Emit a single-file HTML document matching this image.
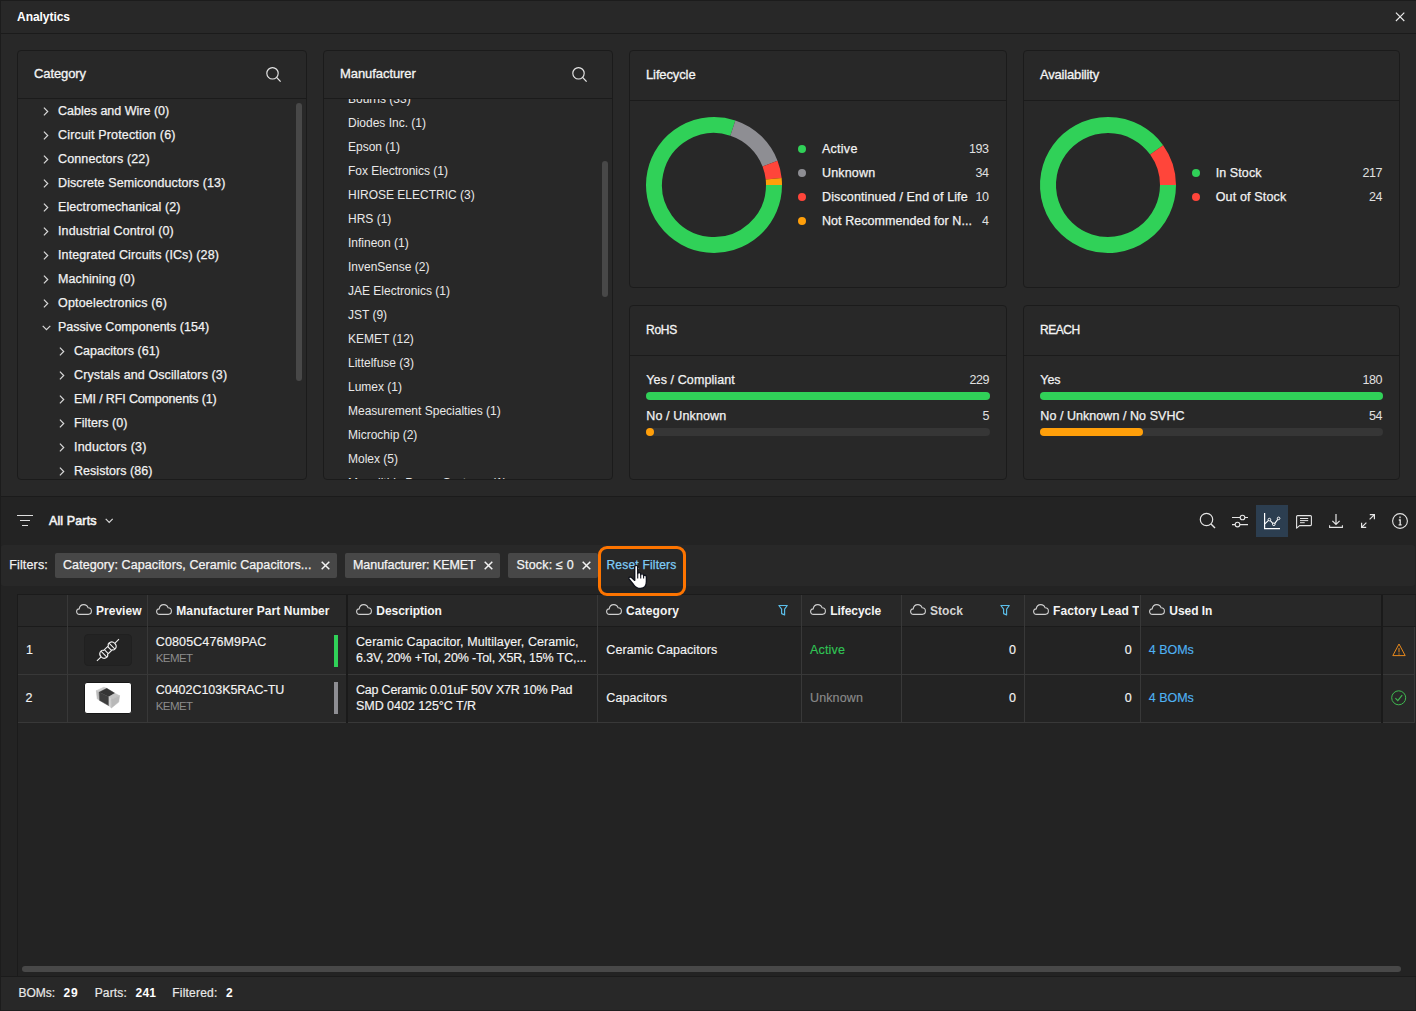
<!DOCTYPE html>
<html>
<head>
<meta charset="utf-8">
<title>Analytics</title>
<style>
*{box-sizing:border-box;margin:0;padding:0}
html,body{width:1416px;height:1011px;overflow:hidden;background:#282828}
body{font-family:"Liberation Sans",sans-serif;font-size:12.5px;color:#f0f0f0;position:relative}
.t{position:absolute;white-space:pre;line-height:1}
.a{position:absolute}
.card{position:absolute;border:1px solid #1b1b1b;border-radius:4px}
.hl{position:absolute;height:1px;background:#1b1b1b}
.vl{position:absolute;width:1px;background:#383838}
.sb{position:absolute;background:#484848;border-radius:3px}
.dot{position:absolute;width:8px;height:8px;border-radius:50%}
.chip{position:absolute;top:553px;height:25px;background:#474747;border-radius:2px}
svg{position:absolute;overflow:visible}
</style>
</head>
<body>
<div class="a" style="left:0;top:0;width:1416px;height:33px;background:#282828"></div>
<div class="hl" style="left:0;top:33px;width:1416px"></div>
<div class="t" style="left:17.00px;top:11.00px;font-size:12px;font-weight:bold;color:#ffffff;letter-spacing:-0.040px;">Analytics</div>
<svg style="left:1395px;top:12px" width="10" height="10" viewBox="0 0 10 10"><path d="M0.9 0.6 L9.3 9 M9.3 0.6 L0.9 9" stroke="#ededed" stroke-width="1.1" fill="none"/></svg>
<div class="card" style="left:17px;top:50px;width:290px;height:430px"></div>
<div class="hl" style="left:18px;top:98px;width:288px"></div>
<div class="t" style="left:34.00px;top:67.00px;font-size:13px;-webkit-text-stroke:0.3px;color:#f4f4f4;letter-spacing:-0.094px;">Category</div>
<svg style="left:266px;top:67px" width="16" height="16" viewBox="0 0 16 16"><circle cx="6.5" cy="6.3" r="5.7" stroke="#e6e6e6" stroke-width="1.15" fill="none"/><path d="M10.6 10.4 L14.6 14.6" stroke="#e6e6e6" stroke-width="1.3" fill="none"/></svg>
<div class="card" style="left:323px;top:50px;width:290px;height:430px"></div>
<div class="hl" style="left:324px;top:98px;width:288px"></div>
<div class="t" style="left:340.00px;top:67.00px;font-size:13px;-webkit-text-stroke:0.3px;color:#f4f4f4;letter-spacing:-0.066px;">Manufacturer</div>
<svg style="left:572px;top:67px" width="16" height="16" viewBox="0 0 16 16"><circle cx="6.5" cy="6.3" r="5.7" stroke="#e6e6e6" stroke-width="1.15" fill="none"/><path d="M10.6 10.4 L14.6 14.6" stroke="#e6e6e6" stroke-width="1.3" fill="none"/></svg>
<div class="card" style="left:629px;top:50px;width:378px;height:238px"></div>
<div class="hl" style="left:630px;top:100px;width:376px"></div>
<div class="t" style="left:646.00px;top:68.00px;font-size:13px;-webkit-text-stroke:0.3px;color:#f4f4f4;letter-spacing:-0.120px;">Lifecycle</div>
<div class="card" style="left:1023px;top:50px;width:377px;height:238px"></div>
<div class="hl" style="left:1024px;top:100px;width:375px"></div>
<div class="t" style="left:1040.00px;top:68.00px;font-size:13px;-webkit-text-stroke:0.3px;color:#f4f4f4;letter-spacing:-0.182px;">Availability</div>
<div class="card" style="left:629px;top:305px;width:378px;height:175px"></div>
<div class="hl" style="left:630px;top:355px;width:376px"></div>
<div class="t" style="left:646.00px;top:324.00px;font-size:12px;-webkit-text-stroke:0.3px;color:#f4f4f4;letter-spacing:-0.254px;">RoHS</div>
<div class="card" style="left:1023px;top:305px;width:377px;height:175px"></div>
<div class="hl" style="left:1024px;top:355px;width:375px"></div>
<div class="t" style="left:1040.00px;top:324.00px;font-size:12px;-webkit-text-stroke:0.3px;color:#f4f4f4;letter-spacing:-0.463px;">REACH</div>
<div class="a" style="left:18px;top:99px;width:288px;height:380px;overflow:hidden">
<div class="a" style="left:-18px;top:-99px;width:1416px;height:1011px">
<svg style="left:43.0px;top:106.5px" width="6" height="9" viewBox="0 0 6 9"><path d="M0.9 0.7 L4.7 4.5 L0.9 8.3" stroke="#d8d8d8" stroke-width="1.2" fill="none"/></svg>
<div class="t" style="left:58.00px;top:105.00px;font-size:12.5px;-webkit-text-stroke:0.25px;color:#f2f2f2;letter-spacing:0.002px;">Cables and Wire (0)</div>
<svg style="left:43.0px;top:130.5px" width="6" height="9" viewBox="0 0 6 9"><path d="M0.9 0.7 L4.7 4.5 L0.9 8.3" stroke="#d8d8d8" stroke-width="1.2" fill="none"/></svg>
<div class="t" style="left:58.00px;top:129.00px;font-size:12.5px;-webkit-text-stroke:0.25px;color:#f2f2f2;letter-spacing:0.166px;">Circuit Protection (6)</div>
<svg style="left:43.0px;top:154.5px" width="6" height="9" viewBox="0 0 6 9"><path d="M0.9 0.7 L4.7 4.5 L0.9 8.3" stroke="#d8d8d8" stroke-width="1.2" fill="none"/></svg>
<div class="t" style="left:58.00px;top:153.00px;font-size:12.5px;-webkit-text-stroke:0.25px;color:#f2f2f2;letter-spacing:0.138px;">Connectors (22)</div>
<svg style="left:43.0px;top:178.5px" width="6" height="9" viewBox="0 0 6 9"><path d="M0.9 0.7 L4.7 4.5 L0.9 8.3" stroke="#d8d8d8" stroke-width="1.2" fill="none"/></svg>
<div class="t" style="left:58.00px;top:177.00px;font-size:12.5px;-webkit-text-stroke:0.25px;color:#f2f2f2;letter-spacing:0.098px;">Discrete Semiconductors (13)</div>
<svg style="left:43.0px;top:202.5px" width="6" height="9" viewBox="0 0 6 9"><path d="M0.9 0.7 L4.7 4.5 L0.9 8.3" stroke="#d8d8d8" stroke-width="1.2" fill="none"/></svg>
<div class="t" style="left:58.00px;top:201.00px;font-size:12.5px;-webkit-text-stroke:0.25px;color:#f2f2f2;letter-spacing:0.077px;">Electromechanical (2)</div>
<svg style="left:43.0px;top:226.5px" width="6" height="9" viewBox="0 0 6 9"><path d="M0.9 0.7 L4.7 4.5 L0.9 8.3" stroke="#d8d8d8" stroke-width="1.2" fill="none"/></svg>
<div class="t" style="left:58.00px;top:225.00px;font-size:12.5px;-webkit-text-stroke:0.25px;color:#f2f2f2;letter-spacing:0.120px;">Industrial Control (0)</div>
<svg style="left:43.0px;top:250.5px" width="6" height="9" viewBox="0 0 6 9"><path d="M0.9 0.7 L4.7 4.5 L0.9 8.3" stroke="#d8d8d8" stroke-width="1.2" fill="none"/></svg>
<div class="t" style="left:58.00px;top:249.00px;font-size:12.5px;-webkit-text-stroke:0.25px;color:#f2f2f2;letter-spacing:0.110px;">Integrated Circuits (ICs) (28)</div>
<svg style="left:43.0px;top:274.5px" width="6" height="9" viewBox="0 0 6 9"><path d="M0.9 0.7 L4.7 4.5 L0.9 8.3" stroke="#d8d8d8" stroke-width="1.2" fill="none"/></svg>
<div class="t" style="left:58.00px;top:273.00px;font-size:12.5px;-webkit-text-stroke:0.25px;color:#f2f2f2;letter-spacing:0.090px;">Machining (0)</div>
<svg style="left:43.0px;top:298.5px" width="6" height="9" viewBox="0 0 6 9"><path d="M0.9 0.7 L4.7 4.5 L0.9 8.3" stroke="#d8d8d8" stroke-width="1.2" fill="none"/></svg>
<div class="t" style="left:58.00px;top:297.00px;font-size:12.5px;-webkit-text-stroke:0.25px;color:#f2f2f2;letter-spacing:0.184px;">Optoelectronics (6)</div>
<svg style="left:41.6px;top:324.6px" width="9" height="6" viewBox="0 0 9 6"><path d="M0.7 0.9 L4.5 4.7 L8.3 0.9" stroke="#d8d8d8" stroke-width="1.2" fill="none"/></svg>
<div class="t" style="left:58.00px;top:321.00px;font-size:12.5px;-webkit-text-stroke:0.25px;color:#f2f2f2;letter-spacing:0.013px;">Passive Components (154)</div>
<svg style="left:59.0px;top:346.5px" width="6" height="9" viewBox="0 0 6 9"><path d="M0.9 0.7 L4.7 4.5 L0.9 8.3" stroke="#d8d8d8" stroke-width="1.2" fill="none"/></svg>
<div class="t" style="left:74.00px;top:345.00px;font-size:12.5px;-webkit-text-stroke:0.25px;color:#f2f2f2;letter-spacing:0.023px;">Capacitors (61)</div>
<svg style="left:59.0px;top:370.5px" width="6" height="9" viewBox="0 0 6 9"><path d="M0.9 0.7 L4.7 4.5 L0.9 8.3" stroke="#d8d8d8" stroke-width="1.2" fill="none"/></svg>
<div class="t" style="left:74.00px;top:369.00px;font-size:12.5px;-webkit-text-stroke:0.25px;color:#f2f2f2;letter-spacing:0.113px;">Crystals and Oscillators (3)</div>
<svg style="left:59.0px;top:394.5px" width="6" height="9" viewBox="0 0 6 9"><path d="M0.9 0.7 L4.7 4.5 L0.9 8.3" stroke="#d8d8d8" stroke-width="1.2" fill="none"/></svg>
<div class="t" style="left:74.00px;top:393.00px;font-size:12.5px;-webkit-text-stroke:0.25px;color:#f2f2f2;letter-spacing:-0.136px;">EMI / RFI Components (1)</div>
<svg style="left:59.0px;top:418.5px" width="6" height="9" viewBox="0 0 6 9"><path d="M0.9 0.7 L4.7 4.5 L0.9 8.3" stroke="#d8d8d8" stroke-width="1.2" fill="none"/></svg>
<div class="t" style="left:74.00px;top:417.00px;font-size:12.5px;-webkit-text-stroke:0.25px;color:#f2f2f2;letter-spacing:0.074px;">Filters (0)</div>
<svg style="left:59.0px;top:442.5px" width="6" height="9" viewBox="0 0 6 9"><path d="M0.9 0.7 L4.7 4.5 L0.9 8.3" stroke="#d8d8d8" stroke-width="1.2" fill="none"/></svg>
<div class="t" style="left:74.00px;top:441.00px;font-size:12.5px;-webkit-text-stroke:0.25px;color:#f2f2f2;letter-spacing:0.179px;">Inductors (3)</div>
<svg style="left:59.0px;top:466.5px" width="6" height="9" viewBox="0 0 6 9"><path d="M0.9 0.7 L4.7 4.5 L0.9 8.3" stroke="#d8d8d8" stroke-width="1.2" fill="none"/></svg>
<div class="t" style="left:74.00px;top:465.00px;font-size:12.5px;-webkit-text-stroke:0.25px;color:#f2f2f2;letter-spacing:0.043px;">Resistors (86)</div>
</div></div>
<div class="sb" style="left:296px;top:103px;width:6px;height:278px"></div>
<div class="a" style="left:324px;top:99px;width:288px;height:380px;overflow:hidden">
<div class="a" style="left:-324px;top:-99px;width:1416px;height:1011px">
<div class="t" style="left:348.00px;top:93.00px;font-size:12px;color:#e8e8e8;">Bourns (33)</div>
<div class="t" style="left:348.00px;top:117.00px;font-size:12px;color:#e8e8e8;">Diodes Inc. (1)</div>
<div class="t" style="left:348.00px;top:141.00px;font-size:12px;color:#e8e8e8;">Epson (1)</div>
<div class="t" style="left:348.00px;top:165.00px;font-size:12px;color:#e8e8e8;">Fox Electronics (1)</div>
<div class="t" style="left:348.00px;top:189.00px;font-size:12px;color:#e8e8e8;">HIROSE ELECTRIC (3)</div>
<div class="t" style="left:348.00px;top:213.00px;font-size:12px;color:#e8e8e8;">HRS (1)</div>
<div class="t" style="left:348.00px;top:237.00px;font-size:12px;color:#e8e8e8;">Infineon (1)</div>
<div class="t" style="left:348.00px;top:261.00px;font-size:12px;color:#e8e8e8;">InvenSense (2)</div>
<div class="t" style="left:348.00px;top:285.00px;font-size:12px;color:#e8e8e8;">JAE Electronics (1)</div>
<div class="t" style="left:348.00px;top:309.00px;font-size:12px;color:#e8e8e8;">JST (9)</div>
<div class="t" style="left:348.00px;top:333.00px;font-size:12px;color:#e8e8e8;">KEMET (12)</div>
<div class="t" style="left:348.00px;top:357.00px;font-size:12px;color:#e8e8e8;">Littelfuse (3)</div>
<div class="t" style="left:348.00px;top:381.00px;font-size:12px;color:#e8e8e8;">Lumex (1)</div>
<div class="t" style="left:348.00px;top:405.00px;font-size:12px;color:#e8e8e8;">Measurement Specialties (1)</div>
<div class="t" style="left:348.00px;top:429.00px;font-size:12px;color:#e8e8e8;">Microchip (2)</div>
<div class="t" style="left:348.00px;top:453.00px;font-size:12px;color:#e8e8e8;">Molex (5)</div>
<div class="t" style="left:348.00px;top:477.00px;font-size:12px;color:#e8e8e8;">Monolithic Power Systems (1)</div>
</div></div>
<div class="sb" style="left:602px;top:161px;width:6px;height:136px"></div>
<svg style="left:644px;top:115px" width="140" height="140" viewBox="644 115 140 140"><path d="M774.000 185.000 A60 60 0 1 1 732.838 128.034" stroke="#30d158" stroke-width="16" fill="none"/><path d="M732.838 128.034 A60 60 0 0 1 770.047 163.583" stroke="#8e8e93" stroke-width="16" fill="none"/><path d="M770.047 163.583 A60 60 0 0 1 773.674 178.754" stroke="#ff453a" stroke-width="16" fill="none"/><path d="M773.674 178.754 A60 60 0 0 1 774.000 185.000" stroke="#ff9f0a" stroke-width="16" fill="none"/></svg>
<svg style="left:1038px;top:115px" width="140" height="140" viewBox="1038 115 140 140"><path d="M1168.000 185.000 A60 60 0 1 1 1156.633 149.860" stroke="#30d158" stroke-width="16" fill="none"/><path d="M1156.633 149.860 A60 60 0 0 1 1168.000 185.000" stroke="#ff453a" stroke-width="16" fill="none"/></svg>
<div class="dot" style="left:798px;top:145px;background:#30d158"></div>
<div class="t" style="left:822.00px;top:143.00px;font-size:12.5px;-webkit-text-stroke:0.25px;color:#f2f2f2;letter-spacing:0.259px;">Active</div>
<div class="t" style="right:427.40px;top:143.00px;font-size:12.5px;color:#e0e0e0;letter-spacing:-0.4px;">193</div>
<div class="dot" style="left:798px;top:169px;background:#8e8e93"></div>
<div class="t" style="left:822.00px;top:167.00px;font-size:12.5px;-webkit-text-stroke:0.25px;color:#f2f2f2;letter-spacing:0.168px;">Unknown</div>
<div class="t" style="right:427.40px;top:167.00px;font-size:12.5px;color:#e0e0e0;letter-spacing:-0.4px;">34</div>
<div class="dot" style="left:798px;top:193px;background:#ff453a"></div>
<div class="t" style="left:822.00px;top:191.00px;font-size:12.5px;-webkit-text-stroke:0.25px;color:#f2f2f2;letter-spacing:0.129px;">Discontinued / End of Life</div>
<div class="t" style="right:427.40px;top:191.00px;font-size:12.5px;color:#e0e0e0;letter-spacing:-0.4px;">10</div>
<div class="dot" style="left:798px;top:217px;background:#ff9f0a"></div>
<div class="t" style="left:822.00px;top:215.00px;font-size:12.5px;-webkit-text-stroke:0.25px;color:#f2f2f2;letter-spacing:0.055px;">Not Recommended for N...</div>
<div class="t" style="right:427.40px;top:215.00px;font-size:12.5px;color:#e0e0e0;letter-spacing:-0.4px;">4</div>
<div class="dot" style="left:1192px;top:169px;background:#30d158"></div>
<div class="t" style="left:1215.70px;top:167.00px;font-size:12.5px;-webkit-text-stroke:0.25px;color:#f2f2f2;letter-spacing:0.091px;">In Stock</div>
<div class="t" style="right:33.90px;top:167.00px;font-size:12.5px;color:#e0e0e0;letter-spacing:-0.4px;">217</div>
<div class="dot" style="left:1192px;top:193px;background:#ff453a"></div>
<div class="t" style="left:1215.70px;top:191.00px;font-size:12.5px;-webkit-text-stroke:0.25px;color:#f2f2f2;letter-spacing:0.160px;">Out of Stock</div>
<div class="t" style="right:33.90px;top:191.00px;font-size:12.5px;color:#e0e0e0;letter-spacing:-0.4px;">24</div>
<div class="t" style="left:646.30px;top:374.00px;font-size:12.5px;-webkit-text-stroke:0.25px;color:#f2f2f2;letter-spacing:0.100px;">Yes / Compliant</div>
<div class="t" style="right:426.90px;top:374.00px;font-size:12.5px;color:#e0e0e0;letter-spacing:-0.4px;">229</div>
<div class="a" style="left:646px;top:392px;width:344px;height:8px;border-radius:4px;background:#363636"></div>
<div class="a" style="left:646px;top:392px;width:344.0px;height:8px;border-radius:4px;background:#30d158"></div>
<div class="t" style="left:646.30px;top:410.00px;font-size:12.5px;-webkit-text-stroke:0.25px;color:#f2f2f2;letter-spacing:0.124px;">No / Unknown</div>
<div class="t" style="right:426.90px;top:410.00px;font-size:12.5px;color:#e0e0e0;letter-spacing:-0.4px;">5</div>
<div class="a" style="left:646px;top:428px;width:344px;height:8px;border-radius:4px;background:#363636"></div>
<div class="a" style="left:646px;top:428px;width:7.5px;height:8px;border-radius:4px;background:#ff9f0a"></div>
<div class="t" style="left:1040.30px;top:374.00px;font-size:12.5px;-webkit-text-stroke:0.25px;color:#f2f2f2;letter-spacing:-0.035px;">Yes</div>
<div class="t" style="right:33.90px;top:374.00px;font-size:12.5px;color:#e0e0e0;letter-spacing:-0.4px;">180</div>
<div class="a" style="left:1040px;top:392px;width:343px;height:8px;border-radius:4px;background:#363636"></div>
<div class="a" style="left:1040px;top:392px;width:343.0px;height:8px;border-radius:4px;background:#30d158"></div>
<div class="t" style="left:1040.30px;top:410.00px;font-size:12.5px;-webkit-text-stroke:0.25px;color:#f2f2f2;letter-spacing:0.054px;">No / Unknown / No SVHC</div>
<div class="t" style="right:33.90px;top:410.00px;font-size:12.5px;color:#e0e0e0;letter-spacing:-0.4px;">54</div>
<div class="a" style="left:1040px;top:428px;width:343px;height:8px;border-radius:4px;background:#363636"></div>
<div class="a" style="left:1040px;top:428px;width:103.2px;height:8px;border-radius:4px;background:#ff9f0a"></div>
<div class="a" style="left:0;top:497px;width:1416px;height:514px;background:#232323"></div>
<div class="hl" style="left:0;top:496px;width:1416px"></div>
<div class="a" style="left:17px;top:515px;width:16px;height:1px;background:#dedede"></div><div class="a" style="left:20px;top:520px;width:10px;height:1px;background:#dedede"></div><div class="a" style="left:22px;top:525px;width:6px;height:1px;background:#dedede"></div>
<div class="t" style="left:49.00px;top:515.00px;font-size:12.5px;-webkit-text-stroke:0.55px;color:#f4f4f4;letter-spacing:0.117px;">All Parts</div>
<svg style="left:105px;top:518px" width="9" height="6" viewBox="0 0 9 6"><path d="M0.7 0.9 L4.2 4.4 L7.7 0.9" stroke="#d8d8d8" stroke-width="1.2" fill="none"/></svg>
<div class="a" style="left:1256px;top:505px;width:32px;height:32px;background:#2c3e50"></div>
<svg style="left:1199px;top:512px" width="17" height="17" viewBox="0 0 17 17"><circle cx="7.5" cy="7.5" r="6.2" stroke="#e4e4e4" stroke-width="1.2" fill="none"/><path d="M12 12 L16 16" stroke="#e4e4e4" stroke-width="1.4" fill="none"/></svg>
<svg style="left:1232px;top:513px" width="16" height="16" viewBox="0 0 16 16"><path d="M0 4.5 H8 M13 4.5 H16 M0 11.6 H3 M8 11.6 H16" stroke="#e4e4e4" stroke-width="1.1" fill="none"/><circle cx="10.5" cy="4.5" r="2.3" stroke="#e4e4e4" stroke-width="1.1" fill="none"/><circle cx="5.5" cy="11.6" r="2.3" stroke="#e4e4e4" stroke-width="1.1" fill="none"/></svg>
<svg style="left:1264px;top:513px" width="17" height="17" viewBox="0 0 17 17"><path d="M0.6 0 V15.6 H16" stroke="#ffffff" stroke-width="1.2" fill="none"/><path d="M0.8 10.8 L4.5 7.4 M6.3 7.6 L9 10.6 M10.6 10.6 L13.8 6.4" stroke="#ffffff" stroke-width="1.1" fill="none"/><circle cx="5.4" cy="6.6" r="1.3" stroke="#ffffff" stroke-width="1" fill="none"/><circle cx="9.8" cy="11.3" r="1.3" stroke="#ffffff" stroke-width="1" fill="none"/><circle cx="14.6" cy="5.4" r="1.3" stroke="#ffffff" stroke-width="1" fill="none"/></svg>
<svg style="left:1296px;top:515px" width="16" height="14" viewBox="0 0 16 14"><path d="M0.6 13.2 V1.6 Q0.6 0.6 1.6 0.6 H14.4 Q15.4 0.6 15.4 1.6 V9.6 Q15.4 10.6 14.4 10.6 H3.6 Z" stroke="#e4e4e4" stroke-width="1.1" fill="none" stroke-linejoin="round"/><path d="M4 3.5 H12.2 M4 5.6 H12.2 M4 7.7 H8.7" stroke="#e4e4e4" stroke-width="1" fill="none"/></svg>
<svg style="left:1329px;top:514px" width="14" height="14" viewBox="0 0 14 14"><path d="M7 0 V10.2 M3.4 6.8 L7 10.4 L10.6 6.8" stroke="#e4e4e4" stroke-width="1.2" fill="none"/><path d="M0.6 11.2 V13.4 H13.4 V11.2" stroke="#e4e4e4" stroke-width="1.1" fill="none"/></svg>
<svg style="left:1361px;top:514px" width="14" height="14" viewBox="0 0 14 14"><path d="M8.6 5.4 L13.4 0.6 M8.8 0.6 H13.4 V5.2 M5.4 8.6 L0.6 13.4 M0.6 8.8 V13.4 H5.2" stroke="#e4e4e4" stroke-width="1.2" fill="none"/></svg>
<svg style="left:1392px;top:513px" width="16" height="16" viewBox="0 0 16 16"><circle cx="8" cy="8" r="7.4" stroke="#e4e4e4" stroke-width="1.1" fill="none"/><path d="M8 3.6 V5.2 M6.8 7 H8.2 V11.6 M6.6 11.8 H9.6" stroke="#e4e4e4" stroke-width="1.3" fill="none"/></svg>
<div class="a" style="left:1px;top:545px;width:1414px;height:41px;background:#282828;border-radius:3px"></div>
<div class="t" style="left:9.20px;top:559.00px;font-size:12.5px;-webkit-text-stroke:0.25px;color:#f0f0f0;letter-spacing:0.162px;">Filters:</div>
<div class="chip" style="left:55px;width:282px"></div>
<div class="t" style="left:63.00px;top:559.00px;font-size:12.5px;-webkit-text-stroke:0.25px;color:#f4f4f4;letter-spacing:0.092px;">Category: Capacitors, Ceramic Capacitors...</div>
<svg style="left:321.0px;top:561px" width="9" height="9" viewBox="0 0 9 9"><path d="M0.7 0.7 L8.3 8.3 M8.3 0.7 L0.7 8.3" stroke="#f2f2f2" stroke-width="1.5" fill="none"/></svg>
<div class="chip" style="left:345px;width:155px"></div>
<div class="t" style="left:353.00px;top:559.00px;font-size:12.5px;-webkit-text-stroke:0.25px;color:#f4f4f4;letter-spacing:-0.050px;">Manufacturer: KEMET</div>
<svg style="left:483.5px;top:561px" width="9" height="9" viewBox="0 0 9 9"><path d="M0.7 0.7 L8.3 8.3 M8.3 0.7 L0.7 8.3" stroke="#f2f2f2" stroke-width="1.5" fill="none"/></svg>
<div class="chip" style="left:508px;width:90px"></div>
<div class="t" style="left:516.50px;top:559.00px;font-size:12.5px;-webkit-text-stroke:0.25px;color:#f4f4f4;letter-spacing:0.190px;">Stock: ≤ 0</div>
<svg style="left:581.5px;top:561px" width="9" height="9" viewBox="0 0 9 9"><path d="M0.7 0.7 L8.3 8.3 M8.3 0.7 L0.7 8.3" stroke="#f2f2f2" stroke-width="1.5" fill="none"/></svg>
<div class="a" style="left:18px;top:595px;width:1397px;height:31px;background:#282828"></div>
<div class="a" style="left:18px;top:627px;width:328px;height:95px;background:#282828"></div>
<div class="a" style="left:1383px;top:627px;width:31px;height:95px;background:#282828"></div>
<div class="hl" style="left:17px;top:594px;width:1399px"></div>
<div class="hl" style="left:17px;top:626px;width:1399px"></div>
<div class="hl" style="left:18px;top:674px;width:1397px;background:#383838"></div>
<div class="hl" style="left:18px;top:722px;width:1397px;background:#383838"></div>
<div class="vl" style="left:17px;top:594px;height:382px;background:#1b1b1b"></div>
<div class="vl" style="left:67px;top:595px;height:127px"></div>
<div class="vl" style="left:147px;top:595px;height:127px"></div>
<div class="vl" style="left:597px;top:595px;height:127px"></div>
<div class="vl" style="left:801px;top:595px;height:127px"></div>
<div class="vl" style="left:901px;top:595px;height:127px"></div>
<div class="vl" style="left:1024px;top:595px;height:127px"></div>
<div class="vl" style="left:1140px;top:595px;height:127px"></div>
<div class="vl" style="left:1414px;top:627px;height:96px"></div>
<div class="vl" style="left:346px;top:595px;height:128px;width:2px;background:#1a1a1a"></div>
<div class="vl" style="left:1381px;top:595px;height:128px;width:2px;background:#1a1a1a"></div>
<svg style="left:76.0px;top:604px" width="16" height="11" viewBox="0 0 16 11"><path d="M3.6 10.4 C1.6 10.4 0.6 9 0.6 7.6 C0.6 6.1 1.7 5 3.2 4.9 C3.5 2.4 5.3 0.6 7.8 0.6 C9.9 0.6 11.5 1.9 12.1 3.8 C14 3.8 15.4 5.2 15.4 7.1 C15.4 9 14 10.4 12.2 10.4 Z" stroke="#cfcfcf" stroke-width="1.1" fill="none"/></svg>
<div class="t" style="left:96.00px;top:605.00px;font-size:12px;font-weight:bold;color:#f4f4f4;letter-spacing:0.018px;">Preview</div>
<svg style="left:155.6px;top:604px" width="16" height="11" viewBox="0 0 16 11"><path d="M3.6 10.4 C1.6 10.4 0.6 9 0.6 7.6 C0.6 6.1 1.7 5 3.2 4.9 C3.5 2.4 5.3 0.6 7.8 0.6 C9.9 0.6 11.5 1.9 12.1 3.8 C14 3.8 15.4 5.2 15.4 7.1 C15.4 9 14 10.4 12.2 10.4 Z" stroke="#cfcfcf" stroke-width="1.1" fill="none"/></svg>
<div class="t" style="left:176.30px;top:605.00px;font-size:12px;font-weight:bold;color:#f4f4f4;letter-spacing:0.080px;">Manufacturer Part Number</div>
<svg style="left:356.0px;top:604px" width="16" height="11" viewBox="0 0 16 11"><path d="M3.6 10.4 C1.6 10.4 0.6 9 0.6 7.6 C0.6 6.1 1.7 5 3.2 4.9 C3.5 2.4 5.3 0.6 7.8 0.6 C9.9 0.6 11.5 1.9 12.1 3.8 C14 3.8 15.4 5.2 15.4 7.1 C15.4 9 14 10.4 12.2 10.4 Z" stroke="#cfcfcf" stroke-width="1.1" fill="none"/></svg>
<div class="t" style="left:376.30px;top:605.00px;font-size:12px;font-weight:bold;color:#f4f4f4;letter-spacing:-0.047px;">Description</div>
<svg style="left:606.0px;top:604px" width="16" height="11" viewBox="0 0 16 11"><path d="M3.6 10.4 C1.6 10.4 0.6 9 0.6 7.6 C0.6 6.1 1.7 5 3.2 4.9 C3.5 2.4 5.3 0.6 7.8 0.6 C9.9 0.6 11.5 1.9 12.1 3.8 C14 3.8 15.4 5.2 15.4 7.1 C15.4 9 14 10.4 12.2 10.4 Z" stroke="#cfcfcf" stroke-width="1.1" fill="none"/></svg>
<div class="t" style="left:626.00px;top:605.00px;font-size:12px;font-weight:bold;color:#f4f4f4;letter-spacing:0.123px;">Category</div>
<svg style="left:777.5px;top:604px" width="12" height="12" viewBox="0 0 12 12"><path d="M0.9 1.5 H9.3 L6.6 5.1 V10.9 L3.6 9.6 V5.1 Z" stroke="#5bbfeb" stroke-width="1.15" fill="none" stroke-linejoin="round"/></svg>
<svg style="left:810.0px;top:604px" width="16" height="11" viewBox="0 0 16 11"><path d="M3.6 10.4 C1.6 10.4 0.6 9 0.6 7.6 C0.6 6.1 1.7 5 3.2 4.9 C3.5 2.4 5.3 0.6 7.8 0.6 C9.9 0.6 11.5 1.9 12.1 3.8 C14 3.8 15.4 5.2 15.4 7.1 C15.4 9 14 10.4 12.2 10.4 Z" stroke="#cfcfcf" stroke-width="1.1" fill="none"/></svg>
<div class="t" style="left:830.20px;top:605.00px;font-size:12px;font-weight:bold;color:#f4f4f4;letter-spacing:-0.042px;">Lifecycle</div>
<svg style="left:910.0px;top:604px" width="16" height="11" viewBox="0 0 16 11"><path d="M3.6 10.4 C1.6 10.4 0.6 9 0.6 7.6 C0.6 6.1 1.7 5 3.2 4.9 C3.5 2.4 5.3 0.6 7.8 0.6 C9.9 0.6 11.5 1.9 12.1 3.8 C14 3.8 15.4 5.2 15.4 7.1 C15.4 9 14 10.4 12.2 10.4 Z" stroke="#cfcfcf" stroke-width="1.1" fill="none"/></svg>
<div class="t" style="left:930.00px;top:605.00px;font-size:12px;font-weight:bold;color:#d4d4d4;letter-spacing:0.062px;">Stock</div>
<svg style="left:1000.3px;top:604px" width="12" height="12" viewBox="0 0 12 12"><path d="M0.9 1.5 H9.3 L6.6 5.1 V10.9 L3.6 9.6 V5.1 Z" stroke="#5bbfeb" stroke-width="1.15" fill="none" stroke-linejoin="round"/></svg>
<svg style="left:1033.0px;top:604px" width="16" height="11" viewBox="0 0 16 11"><path d="M3.6 10.4 C1.6 10.4 0.6 9 0.6 7.6 C0.6 6.1 1.7 5 3.2 4.9 C3.5 2.4 5.3 0.6 7.8 0.6 C9.9 0.6 11.5 1.9 12.1 3.8 C14 3.8 15.4 5.2 15.4 7.1 C15.4 9 14 10.4 12.2 10.4 Z" stroke="#cfcfcf" stroke-width="1.1" fill="none"/></svg>
<div class="t" style="left:1053.10px;top:605.00px;font-size:12px;font-weight:bold;color:#f4f4f4;letter-spacing:0.089px;width:86.3px;overflow:hidden;">Factory Lead Time</div>
<svg style="left:1148.8px;top:604px" width="16" height="11" viewBox="0 0 16 11"><path d="M3.6 10.4 C1.6 10.4 0.6 9 0.6 7.6 C0.6 6.1 1.7 5 3.2 4.9 C3.5 2.4 5.3 0.6 7.8 0.6 C9.9 0.6 11.5 1.9 12.1 3.8 C14 3.8 15.4 5.2 15.4 7.1 C15.4 9 14 10.4 12.2 10.4 Z" stroke="#cfcfcf" stroke-width="1.1" fill="none"/></svg>
<div class="t" style="left:1169.30px;top:605.00px;font-size:12px;font-weight:bold;color:#f4f4f4;letter-spacing:-0.049px;">Used In</div>
<div class="t" style="left:26.00px;top:644.00px;font-size:12.5px;-webkit-text-stroke:0.15px;color:#f2f2f2;">1</div>
<div class="t" style="left:25.50px;top:692.00px;font-size:12.5px;-webkit-text-stroke:0.15px;color:#f2f2f2;">2</div>
<div class="a" style="left:84px;top:634px;width:48px;height:32px;border:1px solid #202020;border-radius:4px;background:#232323"></div>
<svg style="left:84px;top:634px" width="48" height="32" viewBox="0 0 48 32"><g transform="translate(23.95,16.1) rotate(-44.6)" stroke="#ececec" stroke-width="1.1" fill="none"><path d="M-15.5 0 H-9.6 M9.6 0 H15.5"/><path d="M-9.6 0 C-9.6 -4.9 -4.2 -5.1 -3.3 -2.8 L3.3 -2.8 C4.2 -5.1 9.6 -4.9 9.6 0 C9.6 4.9 4.2 5.1 3.3 2.8 L-3.3 2.8 C-4.2 5.1 -9.6 4.9 -9.6 0 Z"/><path d="M-5.7 -4.2 V4.2 M-2.3 -2.8 V2.8 M2.3 -2.8 V2.8 M5.7 -4.2 V4.2"/></g></svg>
<div class="a" style="left:84px;top:682px;width:48px;height:32px;border:1px solid #171717;border-radius:3px;background:#ffffff"></div>
<svg style="left:84px;top:682px" width="48" height="32" viewBox="0 0 48 32"><polygon points="12.29,8.68 19.94,5.12 22.79,6.37 15.14,10.29" fill="#cbcbcb" stroke="#cbcbcb" stroke-width="0.5"/><polygon points="12.29,8.68 15.14,10.29 15.67,18.48 13.18,16.87" fill="#bcbcbc" stroke="#bcbcbc" stroke-width="0.5"/><polygon points="15.14,10.29 22.79,6.37 30.98,11.35 24.93,14.74" fill="#353535" stroke="#353535" stroke-width="0.5"/><polygon points="15.14,10.29 24.93,14.74 24.93,23.82 15.67,18.48" fill="#3e3e3e" stroke="#3e3e3e" stroke-width="0.5"/><polygon points="24.93,14.74 30.98,11.35 35.61,13.67 27.07,17.41" fill="#c4c4c4" stroke="#c4c4c4" stroke-width="0.5"/><polygon points="24.93,14.74 27.07,17.41 27.42,25.96 24.93,23.82" fill="#d0d0d0" stroke="#d0d0d0" stroke-width="0.5"/><polygon points="27.07,17.41 35.61,13.67 34.72,20.08 27.42,25.96" fill="#b9b9b9" stroke="#b9b9b9" stroke-width="0.5"/></svg>
<div class="t" style="left:155.80px;top:636.00px;font-size:12.5px;-webkit-text-stroke:0.15px;color:#f4f4f4;letter-spacing:0.117px;">C0805C476M9PAC</div>
<div class="t" style="left:155.80px;top:653.00px;font-size:11.5px;color:#8c8c8c;letter-spacing:-0.605px;">KEMET</div>
<div class="t" style="left:155.80px;top:684.00px;font-size:12.5px;-webkit-text-stroke:0.15px;color:#f4f4f4;letter-spacing:-0.043px;">C0402C103K5RAC-TU</div>
<div class="t" style="left:155.80px;top:701.00px;font-size:11.5px;color:#8c8c8c;letter-spacing:-0.605px;">KEMET</div>
<div class="a" style="left:334px;top:635px;width:4px;height:32px;background:#30d158"></div>
<div class="a" style="left:334px;top:682px;width:4px;height:32px;background:#8e8e93"></div>
<div class="t" style="left:356.00px;top:636.00px;font-size:12.5px;-webkit-text-stroke:0.15px;color:#f4f4f4;letter-spacing:0.077px;">Ceramic Capacitor, Multilayer, Ceramic,</div>
<div class="t" style="left:356.00px;top:652.00px;font-size:12.5px;-webkit-text-stroke:0.15px;color:#f4f4f4;letter-spacing:-0.134px;">6.3V, 20% +Tol, 20% -Tol, X5R, 15% TC,...</div>
<div class="t" style="left:356.00px;top:684.00px;font-size:12.5px;-webkit-text-stroke:0.15px;color:#f4f4f4;letter-spacing:-0.198px;">Cap Ceramic 0.01uF 50V X7R 10% Pad</div>
<div class="t" style="left:356.00px;top:700.00px;font-size:12.5px;-webkit-text-stroke:0.15px;color:#f4f4f4;letter-spacing:-0.044px;">SMD 0402 125°C T/R</div>
<div class="t" style="left:606.30px;top:644.00px;font-size:12.5px;-webkit-text-stroke:0.15px;color:#f4f4f4;letter-spacing:0.069px;">Ceramic Capacitors</div>
<div class="t" style="left:606.30px;top:692.00px;font-size:12.5px;-webkit-text-stroke:0.15px;color:#f4f4f4;letter-spacing:0.105px;">Capacitors</div>
<div class="t" style="left:810.00px;top:644.00px;font-size:12.5px;-webkit-text-stroke:0.15px;color:#30c455;letter-spacing:0.159px;">Active</div>
<div class="t" style="left:810.00px;top:692.00px;font-size:12.5px;-webkit-text-stroke:0.15px;color:#8a8a8a;letter-spacing:0.125px;">Unknown</div>
<div class="t" style="right:400.00px;top:644.00px;font-size:12.5px;-webkit-text-stroke:0.15px;color:#f4f4f4;">0</div>
<div class="t" style="right:400.00px;top:692.00px;font-size:12.5px;-webkit-text-stroke:0.15px;color:#f4f4f4;">0</div>
<div class="t" style="right:284.30px;top:644.00px;font-size:12.5px;-webkit-text-stroke:0.15px;color:#f4f4f4;">0</div>
<div class="t" style="right:284.30px;top:692.00px;font-size:12.5px;-webkit-text-stroke:0.15px;color:#f4f4f4;">0</div>
<div class="t" style="left:1148.80px;top:644.00px;font-size:12.5px;-webkit-text-stroke:0.15px;color:#4fb2f2;letter-spacing:-0.026px;">4 BOMs</div>
<div class="t" style="left:1148.80px;top:692.00px;font-size:12.5px;-webkit-text-stroke:0.15px;color:#4fb2f2;letter-spacing:-0.026px;">4 BOMs</div>
<svg style="left:1391.5px;top:643px" width="14" height="14" viewBox="0 0 14 14"><path d="M7 1 L13.2 12.6 H0.8 Z" stroke="#e8891c" stroke-width="1" fill="none" stroke-linejoin="round"/><path d="M7 5 V9.4 M7 10.4 V11.6" stroke="#e8891c" stroke-width="1" fill="none"/></svg>
<svg style="left:1391px;top:690px" width="16" height="16" viewBox="0 0 16 16"><circle cx="7.7" cy="7.8" r="7" stroke="#3fb950" stroke-width="1" fill="none"/><path d="M4.4 8.2 L6.8 10.6 L11.2 5.2" stroke="#3fb950" stroke-width="1.1" fill="none"/></svg>
<div class="sb" style="left:22px;top:966px;width:1379px;height:6px"></div>
<div class="a" style="left:0;top:977px;width:1416px;height:34px;background:#282828"></div>
<div class="hl" style="left:0;top:976px;width:1416px"></div>
<div class="t" style="left:18.40px;top:987.00px;font-size:12px;-webkit-text-stroke:0.2px;color:#e8e8e8;letter-spacing:-0.014px;">BOMs:</div>
<div class="t" style="left:63.60px;top:987.00px;font-size:12px;font-weight:bold;color:#ffffff;letter-spacing:0.720px;">29</div>
<div class="t" style="left:94.70px;top:987.00px;font-size:12px;-webkit-text-stroke:0.2px;color:#e8e8e8;letter-spacing:0.159px;">Parts:</div>
<div class="t" style="left:135.60px;top:987.00px;font-size:12px;font-weight:bold;color:#ffffff;letter-spacing:0.123px;">241</div>
<div class="t" style="left:172.20px;top:987.00px;font-size:12px;-webkit-text-stroke:0.2px;color:#e8e8e8;letter-spacing:0.227px;">Filtered:</div>
<div class="t" style="left:226.00px;top:987.00px;font-size:12px;font-weight:bold;color:#ffffff;">2</div>
<div class="a" style="left:598px;top:546px;width:88px;height:50px;border:3px solid #fd7400;border-radius:9px"></div>
<div class="t" style="left:606.50px;top:559.00px;font-size:12px;-webkit-text-stroke:0.25px;color:#7fccf7;letter-spacing:0.203px;">Reset Filters</div>
<svg style="left:626.6px;top:564px" width="22.5" height="27" viewBox="0 0 21 26" preserveAspectRatio="none"><path d="M7.2 2.6 C7.2 0.9 10 0.9 10 2.6 L10 9.3 C10 8 12.8 8 12.8 9.6 L12.8 10.4 C12.8 9.1 15.5 9.2 15.5 10.8 L15.5 11.6 C15.5 10.4 18.1 10.5 18.1 12.2 L18.1 17.2 C18.1 21.5 16 23.6 12.6 23.6 C9.6 23.6 8 22.6 6.2 20 L2 14.6 C1 13.2 2.8 11.8 4.2 13 L7.2 15.8 Z" fill="#ffffff" stroke="#10131c" stroke-width="1.3" stroke-linejoin="round"/><path d="M10 9.5 V14 M12.8 10.5 V14 M15.5 11.6 V14" stroke="#10131c" stroke-width="1" fill="none"/></svg>
<div class="a" style="left:1415px;top:977px;width:1px;height:34px;background:#232323"></div>
<div class="a" style="left:0;top:1010px;width:1416px;height:1px;background:#1e1e1e"></div>
<div class="a" style="left:0;top:0;width:1416px;height:1px;background:#1c1c1c"></div>
<div class="a" style="left:0;top:0;width:1px;height:1011px;background:#1c1c1c"></div>
</body>
</html>
